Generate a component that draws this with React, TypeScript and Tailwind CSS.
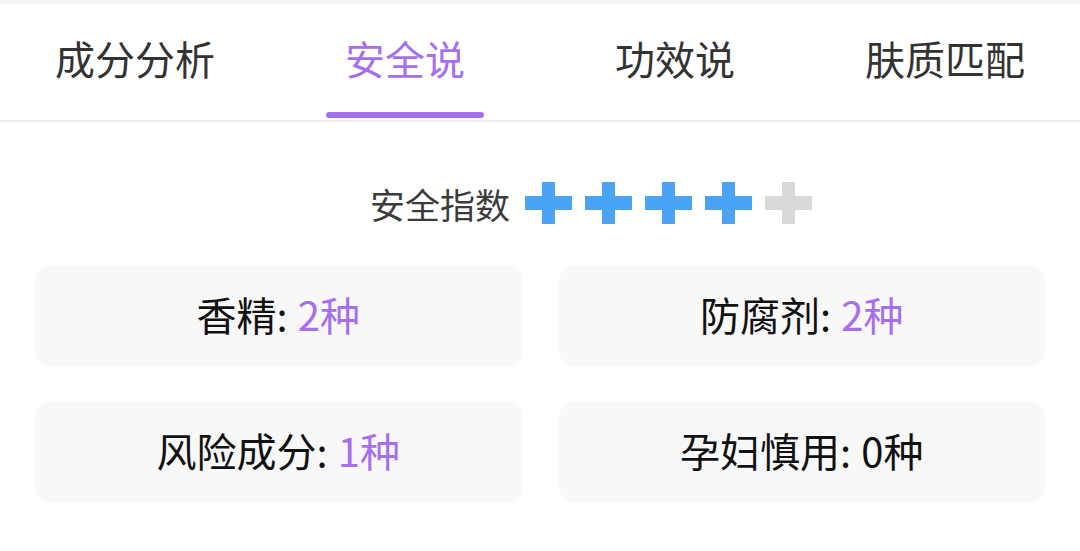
const tabs = ['成分分析', '安全说', '功效说', '肤质匹配']

function Cross({ on }: { on: boolean }) {
  return (
    <svg width="47" height="42" viewBox="0 0 47 42">
      <rect x="0" y="14" width="47" height="14" fill={on ? '#4ba3f6' : '#d9d9d9'} />
      <rect x="17" y="0" width="13" height="42" fill={on ? '#4ba3f6' : '#d9d9d9'} />
    </svg>
  )
}

const stats = [
  { label: '香精', value: '2种', hot: true },
  { label: '防腐剂', value: '2种', hot: true },
  { label: '风险成分', value: '1种', hot: true },
  { label: '孕妇慎用', value: '0种', hot: false },
]

export default function App() {
  return (
    <div
      className="h-[551px] w-[1080px] overflow-hidden bg-white"
      style={{ fontFamily: '"Noto Sans CJK SC", "Noto Sans", sans-serif' }}
    >
      <div className="h-[4px] bg-[#f3f3f3]" />
      <div className="grid h-[118px] grid-cols-4 border-b-2 border-[#ececec]">
        {tabs.map((t, i) => (
          <div key={t} className="relative flex items-center justify-center pb-[8px]">
            <span className={`text-[40px] leading-none ${i === 1 ? 'text-[#a66ff0]' : 'text-[#333]'}`}>{t}</span>
            {i === 1 && <div className="absolute bottom-[2px] left-1/2 h-[6px] w-[158px] -translate-x-1/2 rounded-full bg-[#a66ff0]" />}
          </div>
        ))}
      </div>

      <div className="mt-[60px] flex items-center justify-center gap-[13px] pl-[102px]">
        <span className="mr-[2px] text-[35px] leading-none text-[#3c3c3c]">安全指数</span>
        {[true, true, true, true, false].map((on, i) => (
          <Cross key={i} on={on} />
        ))}
      </div>

      <div className="mt-[42px] grid grid-cols-2 gap-x-[37px] gap-y-[36px] px-[35px]">
        {stats.map((s) => (
          <div key={s.label} className="flex h-[100px] items-center justify-center rounded-[14px] bg-[#f8f8f9] pb-[5px] text-[40px] leading-none text-[#111]">
            <span>{s.label}: </span>
            <span className={s.hot ? 'ml-[10px] text-[#a66ff0]' : 'ml-[10px]'}>{s.value}</span>
          </div>
        ))}
      </div>
    </div>
  )
}
